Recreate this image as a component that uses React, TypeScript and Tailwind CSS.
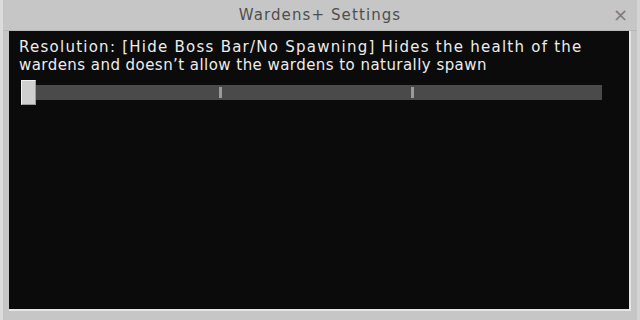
const ticks = [220, 412];

export default function App() {
  return (
    <div className="w-[640px] h-[320px] bg-[#c6c6c6] flex flex-col border-l-[3px] border-l-[#dcdcdc] border-r-[3px] border-r-[#d4d4d4] overflow-hidden">
      {/* Title bar */}
      <div className="relative h-[31px] shrink-0 flex items-center justify-center border-b border-b-[#b8b8b8]">
        <span className="text-[15px] tracking-[1.1px] text-[#4e4e4e] font-['DejaVu_Sans',sans-serif] pt-[1px]">
          Wardens+ Settings
        </span>
        <span className="absolute right-[9px] top-[6px] text-[18px] leading-none text-[#7a7a7a] font-['DejaVu_Sans',sans-serif]">
          ×
        </span>
      </div>

      {/* Content panel */}
      <div className="flex-1 mx-[6px] mb-[9px] bg-[#0b0b0b] border-b-[2px] border-b-[#e6e6e6] border-r-[2px] border-r-[#e6e6e6] flex flex-col">
        <div className="px-[10px] pt-[7px] text-[15px] leading-[18px] text-[#ececec] font-['DejaVu_Sans',sans-serif] whitespace-nowrap">
          <p className="tracking-[1.25px]">Resolution: [Hide Boss Bar/No Spawning] Hides the health of the</p>
          <p className="tracking-[0.45px]">wardens and doesn’t allow the wardens to naturally spawn</p>
        </div>

        {/* Slider */}
        <div className="relative mt-[6px] ml-[12px] w-[581px] h-[25px] flex items-center">
          <div className="ml-[15px] flex-1 h-[15px] bg-[#4a4a4a]" />
          {ticks.map(x => (
            <div
              key={x}
              className="absolute top-[7px] w-[3px] h-[11px] bg-[#9a9a9a]"
              style={{ left: x - 22 }}
            />
          ))}
          <div className="absolute left-0 top-0 w-[15px] h-[25px] bg-[#cfcfcf] border border-[#f2f2f2] border-r-[#9c9c9c] border-b-[#9c9c9c]" />
        </div>
      </div>
    </div>
  );
}
